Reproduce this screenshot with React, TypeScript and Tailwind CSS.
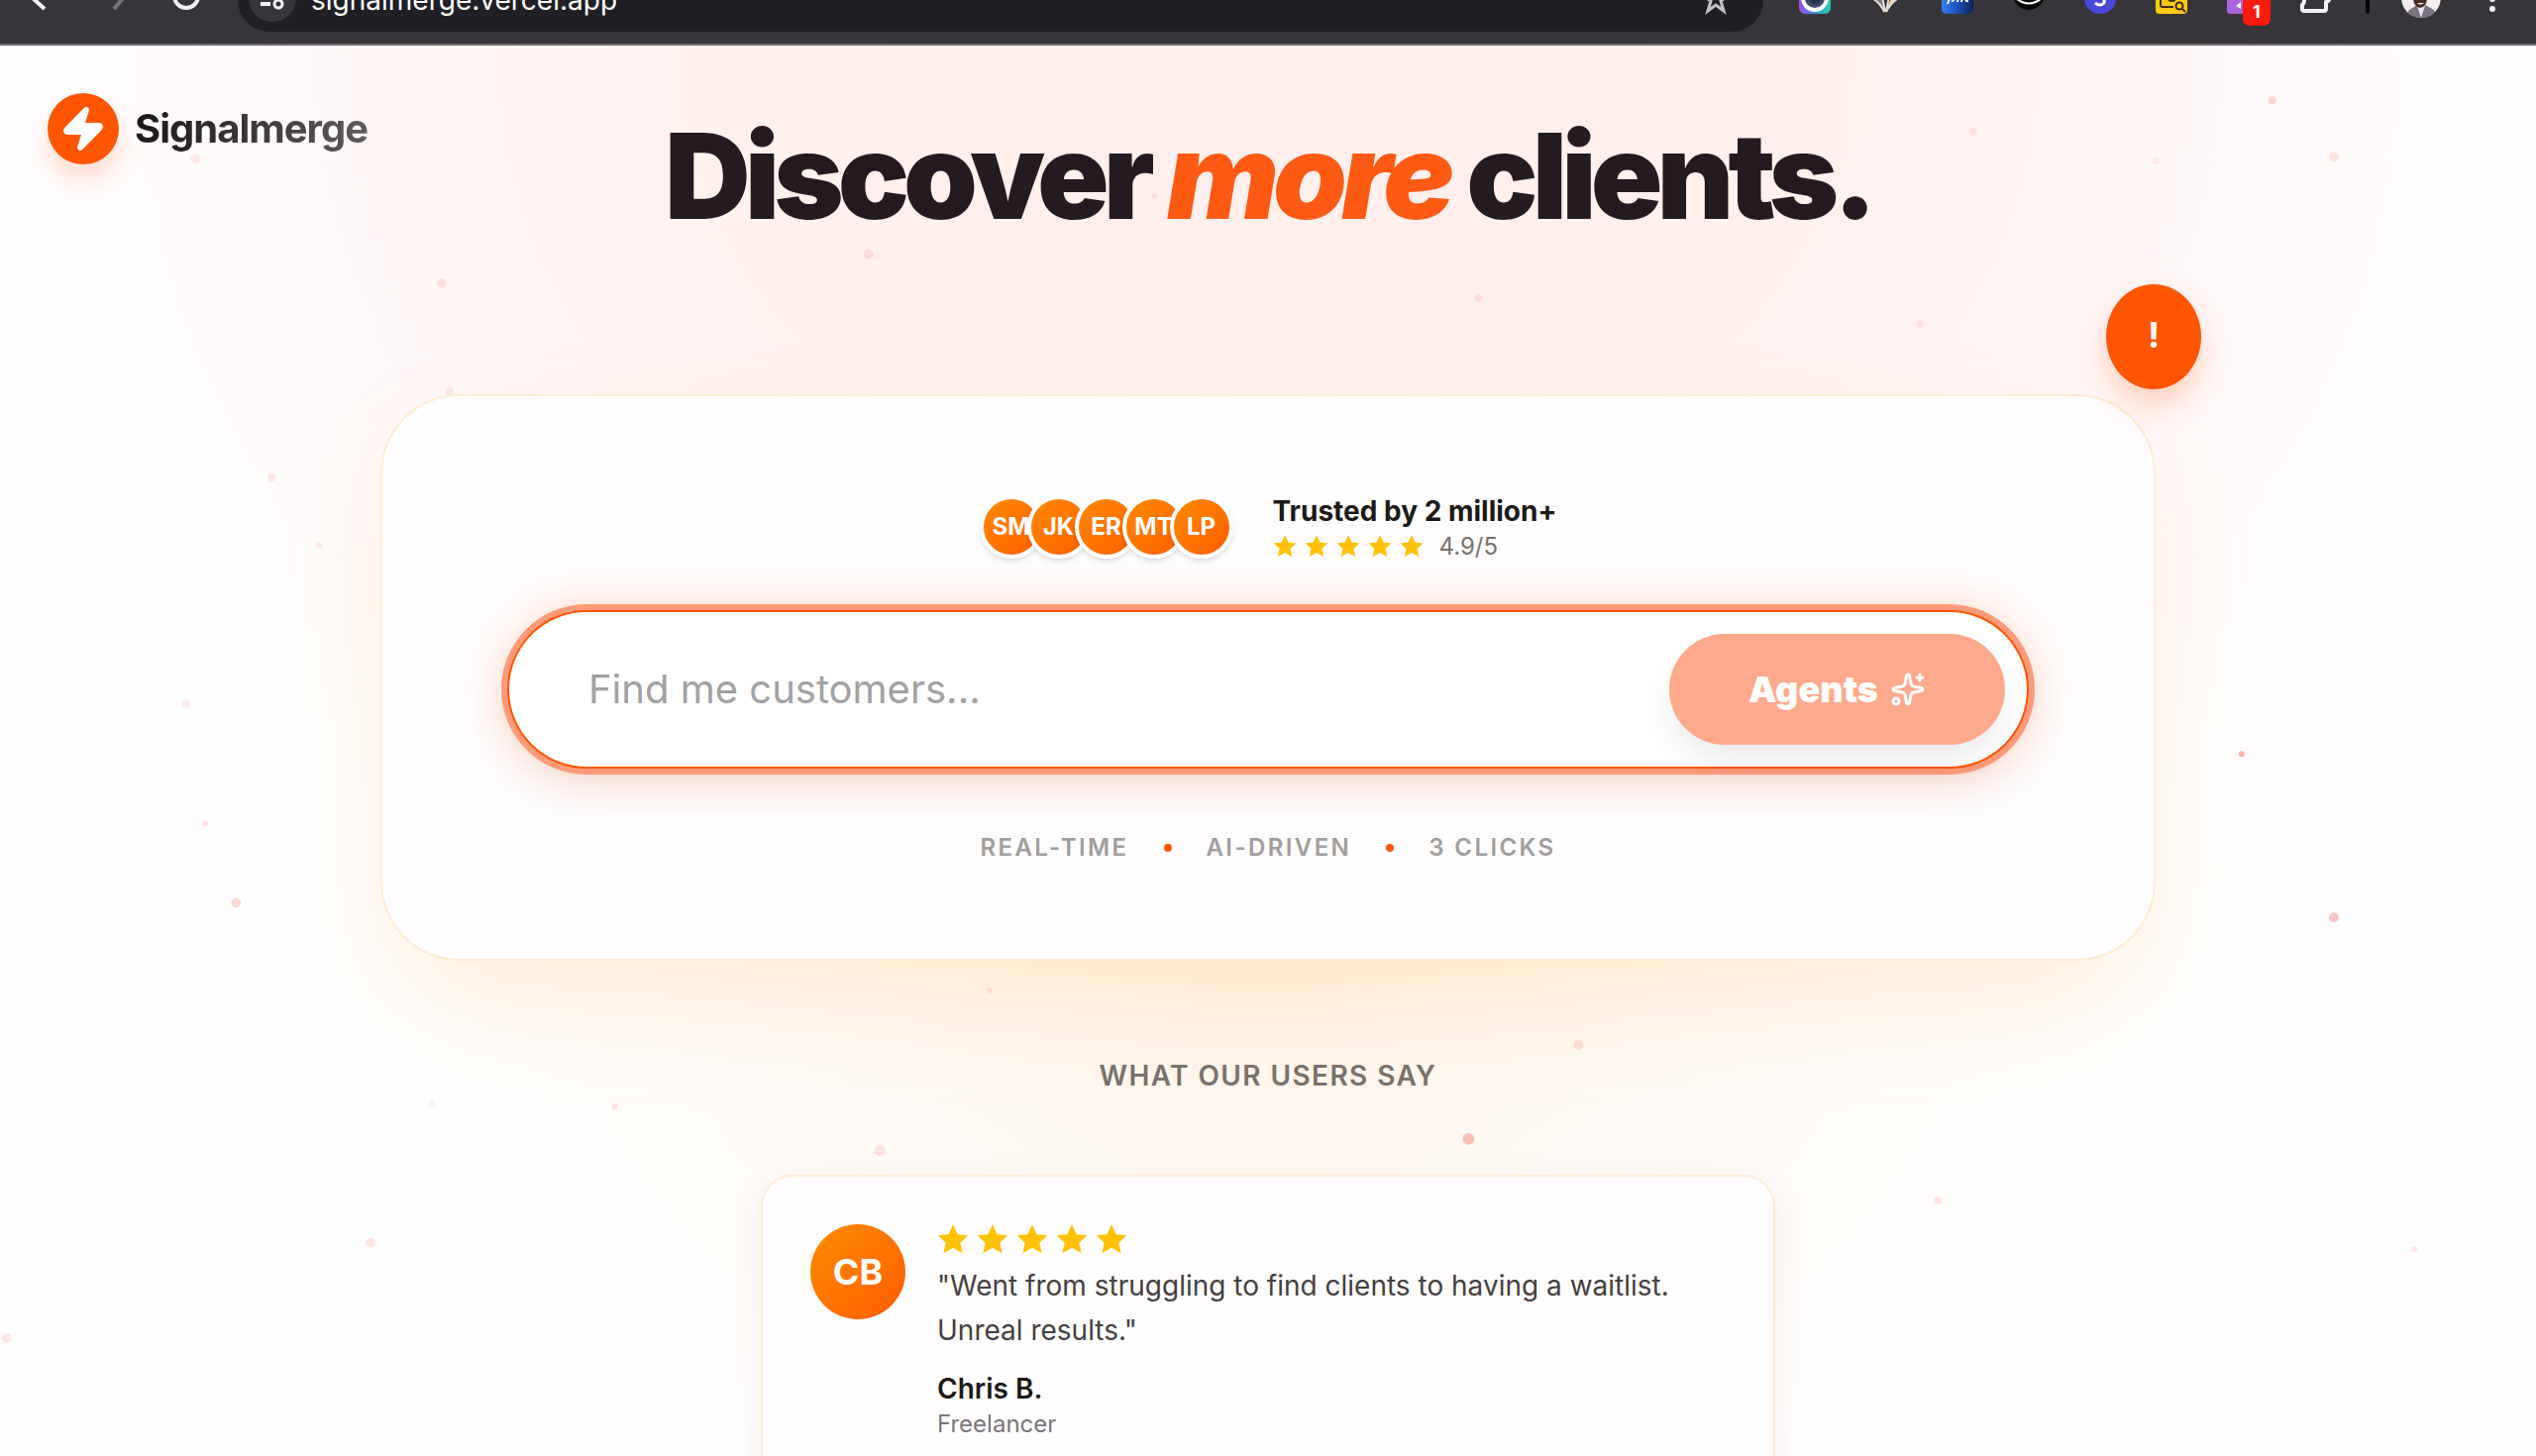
import { Sparkles } from "lucide-react";

function ExtensionIcons() {
  return (
    <svg viewBox="1780 0 780 44" className="h-[44px] w-[780px] shrink-0" aria-hidden="true">
      <defs>
        <linearGradient id="camera" x1="0" x2="1">
          <stop offset="0" stopColor="#a24be8" />
          <stop offset="0.5" stopColor="#3f8de0" />
          <stop offset="1" stopColor="#1fd4a8" />
        </linearGradient>
        <linearGradient id="print" x1="0" x2="1">
          <stop offset="0" stopColor="#3a7ff0" />
          <stop offset="0.5" stopColor="#1a52b8" />
          <stop offset="1" stopColor="#0d2352" />
        </linearGradient>
        <clipPath id="face">
          <circle cx="2444" cy="-2" r="20" />
        </clipPath>
      </defs>
      <rect x="1816" y="-18" width="32" height="32" rx="6" fill="url(#camera)" />
      <circle cx="1832" cy="-2" r="12" fill="#3b4a63" stroke="#fff" strokeWidth="4" />
      <circle cx="1832" cy="-2" r="6" fill="#24324a" />
      <path d="M1889 -4 L1903 13 L1900 -4 Z" fill="#7c7a80" />
      <path d="M1904 13 Q1906 2 1911 -4 H1918 Q1910 3 1904 13 Z" fill="#f6d48a" />
      <path d="M1889 -2 Q1898 2 1902 12 M1903 12 L1900 -4 M1904 12 Q1909 2 1917 -2 M1904 12 L1907 -4" stroke="#e2ddd6" strokeWidth="2" fill="none" />
      <rect x="1960" y="-18" width="32" height="32" rx="5" fill="url(#print)" />
      <path d="M1966 4 L1969 -4 M1970 1 Q1973 1 1973 -4 M1976 2 L1977 -4 M1980 2 L1981 -4 M1985 -4 Q1983 2 1987 1" stroke="#fff" strokeWidth="2" fill="none" />
      <circle cx="2048" cy="-6" r="16" fill="#050505" />
      <path d="M2036 -1 Q2048 8 2060 -1" fill="none" stroke="#fff" strokeWidth="2" />
      <circle cx="2120" cy="-2" r="16" fill="#4a48dc" />
      <path d="M2115 3 Q2120 7 2124 3 Q2126 -2 2116 -5" fill="none" stroke="#fff" strokeWidth="3" />
      <rect x="2176" y="-18" width="32" height="32" rx="4" fill="#fbcb12" />
      <path d="M2181 -4 V5 Q2181 7 2183 7 H2194 M2203 -4 V0 M2187 -4 Q2189 3 2196 0" fill="none" stroke="#3a2b08" strokeWidth="2" />
      <circle cx="2200" cy="6" r="3.5" fill="none" stroke="#3a2b08" strokeWidth="2" />
      <path d="M2203 9 L2206 12" stroke="#3a2b08" strokeWidth="2" />
      <rect x="2248" y="-18" width="32" height="32" rx="3" fill="#a765df" />
      <path d="M2262 2 L2257 6 L2262 9 Z" fill="#fff" />
      <rect x="2264" y="-8" width="28" height="34" rx="7" fill="#fb1b0d" />
      <path d="M2326 -6 V1 Q2326 3 2324 5 V9 Q2324 11 2326 11 H2346 Q2348 11 2348 9 V2 Q2352 1 2351 -4" fill="none" stroke="#f4f2f6" strokeWidth="4" strokeLinejoin="round" />
      <rect x="2388" y="-4" width="4" height="18" rx="2" fill="#050505" />
      <g clipPath="url(#face)">
        <circle cx="2444" cy="-2" r="20" fill="#f2eef0" />
        <path d="M2428 18 L2432 10 L2440 5 H2448 L2457 10 L2460 18 Z" fill="#77727e" />
        <path d="M2440 6 L2444 18 L2448 6 Z" fill="#e9e4e8" />
        <ellipse cx="2443" cy="-2" rx="7" ry="10" fill="#4b2c24" />
        <path d="M2440 3 Q2443 6 2447 3 Z" fill="#fff" />
      </g>
      <circle cx="2516" cy="9" r="3" fill="#f4f2f6" />
      <circle cx="2516" cy="-1" r="3" fill="#f4f2f6" />
    </svg>
  );
}

function BrowserBar() {
  return (
    <div className="relative flex h-[46px] items-start overflow-hidden border-b-2 border-[#6b686e] bg-[#38353a]">
      <svg viewBox="0 0 240 44" className="h-[44px] w-[240px] shrink-0" fill="none" strokeWidth="4" aria-hidden="true">
        <path d="M50 -9 L34 -1 L45 9" stroke="#f4f2f6" />
        <path d="M110 -9 L126 -4 L115 9" stroke="#77747a" />
        <circle cx="188" cy="-4" r="12" stroke="#f4f2f6" />
      </svg>
      <div className="flex h-[32px] min-w-0 flex-1 items-start justify-between overflow-hidden rounded-b-[32px] bg-[#201f25] pr-[32px]">
        <div className="flex items-start">
          <svg viewBox="240 0 74 32" className="h-[32px] w-[74px] shrink-0" aria-hidden="true">
            <circle cx="275" cy="-2" r="24" fill="#38363c" />
            <path d="M263 4 H273" stroke="#f4f2f6" strokeWidth="4" />
            <circle cx="281" cy="4" r="4" fill="none" stroke="#f4f2f6" strokeWidth="3" />
          </svg>
          <span className="-mt-4 text-[28px] leading-8 text-white">signalmerge.vercel.app</span>
        </div>
        <svg viewBox="0 0 32 32" className="-mt-4 h-8 w-8" fill="none" stroke="#c4c1c8" strokeWidth="3" aria-hidden="true">
          <path d="M16 2 L19 12 H28 L21 17 L24 27 L16 21 L8 27 L11 17 L4 12 H13 Z" />
        </svg>
      </div>
      <div className="relative">
        <ExtensionIcons />
        <span className="absolute top-0 left-[484px] w-7 text-center text-[18px] leading-6 font-bold text-white">1</span>
      </div>
    </div>
  );
}

function Star({ className }: { className: string }) {
  return (
    <svg viewBox="0 0 24 24" className={className} fill="#ffc107" aria-hidden="true">
      <path d="M12 0.2l3.4 7.4 8 .9-5.9 5.5 1.7 8L12 17.9l-7.2 4.1 1.7-8L.6 8.5l8-.9z" />
    </svg>
  );
}

function Stars({ size }: { size: string }) {
  return (
    <div className="flex gap-2">
      {[0, 1, 2, 3, 4].map((i) => (
        <Star key={i} className={size} />
      ))}
    </div>
  );
}

const particles = [
  [273, 175, 5, 0.12], [537, 157, 5, 0.12], [914, 184, 4, 0.1], [1220, 81, 4, 0.1],
  [1333, 99, 4, 0.08], [1405, 62, 4, 0.22], [1443, 97, 5, 0.13], [1187, 200, 4, 0.1],
  [168, 295, 4, 0.12], [278, 242, 4, 0.1], [197, 337, 3, 0.1], [115, 435, 4, 0.1],
  [127, 509, 3, 0.15], [146, 558, 5, 0.2], [1386, 466, 3, 0.4], [1443, 567, 5, 0.3],
  [612, 612, 3, 0.12], [976, 646, 5, 0.15], [908, 704, 6, 0.32], [544, 711, 6, 0.13],
  [380, 684, 3, 0.15], [267, 682, 3, 0.08], [229, 768, 5, 0.12], [4, 827, 5, 0.12],
  [1198, 742, 4, 0.12], [1493, 772, 3, 0.12], [121, 98, 5, 0.1], [714, 121, 3, 0.1],
];

function Particles() {
  return (
    <svg viewBox="0 28 1568 872" preserveAspectRatio="none" className="pointer-events-none absolute inset-0 h-full w-full" aria-hidden="true">
      {particles.map(([x, y, d, o]) => (
        <circle key={x} cx={x} cy={y} r={d * 0.6} fill="#f0443a" opacity={o} />
      ))}
    </svg>
  );
}

const people = ["SM", "JK", "ER", "MT", "LP"];

export default function App() {
  return (
    <div className="flex h-screen flex-col overflow-hidden bg-white font-['Inter',sans-serif]">
      <BrowserBar />
      <div className="relative flex-1 overflow-hidden bg-[radial-gradient(ellipse_34%_44%_at_50%_64%,rgba(255,234,208,0.45)_0%,rgba(255,240,225,0.3)_50%,rgba(255,255,255,0)_100%),radial-gradient(ellipse_50%_75%_at_50%_0%,#ffefec_0%,#fff1ee_45%,#fff8f8_75%,#fffefe_100%)]">
        <Particles />
        <a href="#" className="absolute top-12 left-12 flex items-center gap-4">
          <span className="flex h-[72px] w-[72px] items-center justify-center rounded-full bg-[#ff5500] shadow-[0_16px_24px_rgba(255,85,0,0.18)]">
            <svg viewBox="0 0 24 24" className="h-12 w-12" fill="#fff" stroke="#fff" strokeWidth="2" strokeLinecap="round" strokeLinejoin="round" aria-hidden="true">
              <path d="M4 14a1 1 0 0 1-.78-1.63l9.9-10.2a.5.5 0 0 1 .86.46l-1.92 6.02A1 1 0 0 0 13 10h7a1 1 0 0 1 .78 1.63l-9.9 10.2a.5.5 0 0 1-.86-.46l1.92-6.02A1 1 0 0 0 11 14z" />
            </svg>
          </span>
          <span className="bg-linear-to-r from-[#1c1719] to-[#625a5a] bg-clip-text text-[40px] leading-[56px] font-bold tracking-tight text-transparent">Signalmerge</span>
        </a>

        <main className="relative flex flex-col items-center pt-[72px]">
          <h1 className="text-[120px] leading-[120px] font-black tracking-tighter text-[#241b20]">
            Discover <em className="text-[#ff5a14]">more</em> clients.
          </h1>

          <section className="relative mt-40 flex w-[70%] flex-col items-center rounded-[80px] border-2 border-[#ffecd2] bg-[#fffdfd] pt-24 pb-24 shadow-[0_50px_120px_-24px_rgba(255,170,60,0.22)]">
            <button className="absolute -top-[113px] -right-12 h-[106px] w-24 rounded-[50%] bg-[#ff5500] pb-1 text-[36px] font-bold text-white shadow-[0_16px_32px_rgba(255,85,0,0.25)]">!</button>

            <div className="flex items-center gap-10">
              <div className="flex -space-x-4">
                {people.map((p) => (
                  <span key={p} className="flex h-16 w-16 items-center justify-center rounded-full border-4 border-white bg-linear-to-br from-[#ff8c00] to-[#ff5a00] bg-origin-border text-[24px] font-bold text-white shadow-md">
                    {p}
                  </span>
                ))}
              </div>
              <div>
                <p className="text-[28px] leading-10 font-bold text-[#1c1917]">Trusted by 2 million+</p>
                <div className="flex items-center gap-4">
                  <Stars size="h-6 w-6" />
                  <span className="text-[24px] leading-8 text-[#78716c]">4.9/5</span>
                </div>
              </div>
            </div>

            <form className="mt-12 flex h-40 w-full max-w-[1536px] items-center rounded-full border-2 border-[#ff5500] bg-white pr-[22px] pl-20 shadow-[0_0_0_6px_#ff9a78,0_0_48px_rgba(255,85,0,0.26),0_24px_48px_rgba(80,30,10,0.06)]" onSubmit={(e) => e.preventDefault()}>
              <input aria-label="Find me customers" placeholder="Find me customers..." className="min-w-0 flex-1 bg-transparent text-[40px] outline-none placeholder:text-[#a1a1a1]" />
              <button className="flex h-28 items-center gap-3 rounded-full bg-[#ffa98c] px-20 text-[36px] font-black text-white shadow-[0_20px_32px_-4px_rgba(30,30,60,0.09)]">
                Agents
                <Sparkles className="h-9 w-9" />
              </button>
            </form>

            <div className="mt-16 flex items-center gap-[35px] text-[24px] leading-8 font-semibold tracking-widest text-[#a19d9d]">
              <span>REAL-TIME</span>
              <span className="h-2 w-2 rounded-full bg-[#ff5500]" />
              <span>AI-DRIVEN</span>
              <span className="h-2 w-2 rounded-full bg-[#ff5500]" />
              <span>3 CLICKS</span>
            </div>
          </section>

          <h2 className="mt-24 text-[28px] leading-10 font-semibold tracking-wider text-[#78716c]">WHAT OUR USERS SAY</h2>

          <article className="mt-20 flex h-[400px] w-[40%] items-start gap-8 rounded-[32px] border-2 border-[#ffecd9] bg-[#fffdfd] p-12 shadow-[0_8px_32px_rgba(120,60,20,0.08)]">
            <span className="flex h-24 w-24 shrink-0 items-center justify-center rounded-full bg-linear-to-br from-[#ff8c00] to-[#ff5a00] text-[36px] font-bold text-white">CB</span>
            <div>
              <Stars size="h-8 w-8" />
              <p className="mt-2 text-[28px] leading-[45px] text-[#44403f]">"Went from struggling to find clients to having a waitlist. Unreal results."</p>
              <p className="mt-4 text-[28px] leading-10 font-semibold text-[#1c1917]">Chris B.</p>
              <p className="text-[24px] leading-8 text-[#78767a]">Freelancer</p>
            </div>
          </article>
        </main>
      </div>
    </div>
  );
}
